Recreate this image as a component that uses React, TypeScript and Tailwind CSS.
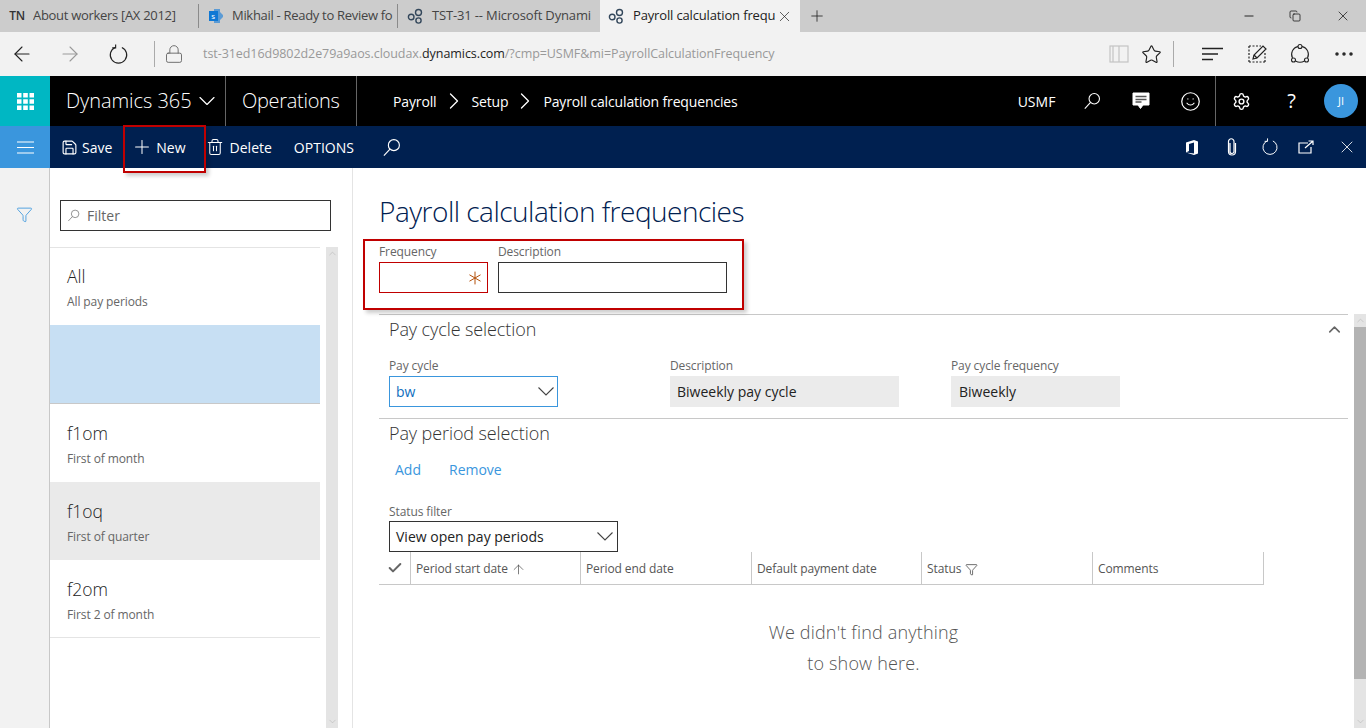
import type { ReactNode } from "react";
import {
  ArrowLeft,
  ArrowRight,
  ArrowUp,
  Asterisk,
  Check,
  ChevronDown,
  ChevronRight,
  ChevronUp,
  Copy,
  Filter,
  Lock,
  Minus,
  MoreHorizontal,
  Plus,
  Save,
  Settings,
  Smile,
  Star,
  Trash2,
  X,
} from "lucide-react";

const Gears = () => (
  <svg width="17" height="17" viewBox="0 0 17 17" fill="none" stroke="#33475b" strokeWidth="1.4">
    <circle cx="4.2" cy="9" r="2.8" />
    <circle cx="11.5" cy="4.5" r="3" />
    <circle cx="11.5" cy="12.5" r="2.6" />
  </svg>
);

const Share = () => (
  <svg width="16" height="16" viewBox="0 0 16 16">
    <path d="M6 1h6v3l3 3v2l-3 3v3H6z" fill="#5b9bd5" />
    <rect x="1" y="3" width="9" height="10" fill="#0f78d4" />
    <text x="3.2" y="11" fontSize="8" fill="#fff" fontFamily="Open Sans, sans-serif">s</text>
  </svg>
);

const Lens = ({ size, cls }: { size: number; cls?: string }) => (
  <svg width={size} height={size} viewBox="0 0 20 20" fill="none" stroke="currentColor" strokeWidth="1.2" className={cls}>
    <circle cx="12.5" cy="7.5" r="5.8" />
    <path d="M8.4 11.6 2 18.5" />
  </svg>
);

const Refresh = ({ size, cls }: { size: number; cls?: string }) => (
  <svg width={size} height={size} viewBox="0 0 22 22" fill="none" stroke="currentColor" strokeWidth="1.2" className={cls}>
    <path d="M7.5 3.6a8.6 8.6 0 1 0 7 0" />
    <path d="M8 0.5v3.6H4.4" />
  </svg>
);

const Wide = () => (
  <svg width="16" height="9" viewBox="0 0 16 9" fill="none" stroke="#444" strokeWidth="1.1">
    <path d="M0.5 0.5 8 8l7.5-7.5" />
  </svg>
);

const Tab = ({ icon, label, w }: { icon: ReactNode; label: string; w: string }) => (
  <div className={`flex items-center h-[24px] overflow-hidden whitespace-nowrap text-[13px] tracking-[-0.3px] text-[#444] border-r border-[#8a8a8a] ${w}`}>
    <div className="w-[33px] flex justify-center shrink-0">{icon}</div>
    <span className="overflow-hidden pr-[6px]">{label}</span>
  </div>
);

const ListItem = ({ title, sub, cls }: { title: string; sub: string; cls?: string }) => (
  <div className={`h-[78px] pl-[17px] pt-[17px] ${cls ?? ""}`}>
    <div className="text-[17.5px] leading-[24px] font-light text-[#222]">{title}</div>
    <div className="text-[12px] leading-[16px] tracking-[-0.1px] mt-[6px] text-[#666]">{sub}</div>
  </div>
);

const Label = ({ children, cls }: { children: ReactNode; cls?: string }) => (
  <div className={`text-[12px] leading-[14px] tracking-[-0.1px] text-[#666] mb-[3px] ${cls ?? ""}`}>{children}</div>
);

const Col = ({ children, w }: { children: ReactNode; w: string }) => (
  <div className={`flex items-center h-full border-l border-[#c8c8c8] pl-[5px] pt-[2px] text-[12px] tracking-[-0.1px] text-[#555] ${w}`}>{children}</div>
);

export default function App() {
  return (
    <div className="relative w-[1366px] h-[728px] overflow-hidden bg-white flex flex-col font-['Open_Sans',sans-serif]">
      {/* browser tabs */}
      <div className="h-[32px] bg-[#cccccc] flex items-center shrink-0">
        <Tab w="w-[199px]" icon={<span className="text-[12px] font-semibold text-[#333] pl-[1px]">TN</span>} label="About workers [AX 2012]" />
        <Tab w="w-[199px]" icon={<Share />} label="Mikhail - Ready to Review fo" />
        <div className="w-[202px] flex items-center h-full overflow-hidden whitespace-nowrap text-[13px] tracking-[-0.15px] text-[#444]">
          <div className="w-[34px] flex justify-center shrink-0"><Gears /></div>
          <span>TST-31 -- Microsoft Dynami</span>
        </div>
        <div className="w-[200px] h-full bg-[#f2f2f2] flex items-center text-[13px] tracking-[-0.15px] text-[#222] whitespace-nowrap">
          <div className="w-[33px] flex justify-center shrink-0"><Gears /></div>
          <span className="w-[143px] overflow-hidden">Payroll calculation frequ</span>
          <X size={17} strokeWidth={1} />
        </div>
        <Plus size={18} strokeWidth={1.1} className="ml-[8px] text-[#222]" />
        <div className="flex-1" />
        <Minus size={14} strokeWidth={1.5} className="mr-[33px] text-[#111]" />
        <Copy size={12} strokeWidth={1.5} className="mr-[34px] text-[#111]" />
        <X size={16} strokeWidth={1.1} className="mr-[15px] text-[#111]" />
      </div>

      {/* address bar */}
      <div className="h-[44px] bg-[#f2f2f2] flex items-center shrink-0 pl-[10px]">
        <ArrowLeft size={24} strokeWidth={1.1} className="text-[#222]" />
        <ArrowRight size={24} strokeWidth={1.1} className="ml-[24px] text-[#9a9a9a]" />
        <Refresh size={21} cls="ml-[26px] text-[#222]" />
        <div className="w-px h-[26px] bg-[#aaa] ml-[25px]" />
        <Lock size={20} strokeWidth={1.1} className="ml-[9px] text-[#666]" />
        <div className="ml-[19px] text-[12.5px] tracking-[-0.06px] text-[#999] whitespace-nowrap">
          tst-31ed16d9802d2e79a9aos.cloudax.<span className="text-[#222]">dynamics.com</span>/?cmp=USMF&amp;mi=PayrollCalculationFrequency
        </div>
        <div className="flex-1" />
        <svg width="20" height="20" viewBox="0 0 20 20" fill="none" stroke="#c4c4c4" strokeWidth="1.2" className="mr-[12px]">
          <rect x="1" y="2" width="18" height="16" />
          <path d="M10 2v16M4 2v16" />
        </svg>
        <Star size={21} strokeWidth={1.3} className="text-[#222] mr-[11px]" />
        <div className="w-px h-[26px] bg-[#aaa] mr-[28px]" />
        <svg width="21" height="14" viewBox="0 0 21 14" stroke="#222" strokeWidth="1.3" className="mr-[24px]">
          <path d="M0 1.5h21M0 7h16M0 12.5h11" />
        </svg>
        <svg width="20" height="20" viewBox="0 0 20 20" fill="none" stroke="#222" strokeWidth="1.2" className="mr-[22px]">
          <path d="M2 2h12M2 18h16M2 2v16M18 9v9" strokeDasharray="2 1.5" />
          <path d="M6 15l1-4 9-9 3 3-9 9z" />
          <path d="M7 11l3 3" />
        </svg>
        <svg width="22" height="22" viewBox="0 0 22 22" fill="none" stroke="#222" strokeWidth="1.1" className="mr-[21px]">
          <path d="M9 3.5A8 8 0 0 0 3.5 15M18.5 15A8 8 0 0 0 13 3.5M6.5 18a9 9 0 0 0 9 0" />
          <circle cx="11" cy="3.5" r="2" />
          <circle cx="4.5" cy="17" r="2" />
          <circle cx="17.5" cy="17" r="2" />
        </svg>
        <MoreHorizontal size={24} strokeWidth={1.5} className="text-[#222] mr-[10px]" />
      </div>

      {/* black nav */}
      <div className="h-[50px] bg-black flex items-center shrink-0 text-white">
        <div className="w-[50px] h-full bg-[#00b7c3] flex items-center justify-center">
          <svg width="17" height="17" viewBox="0 0 17 17" fill="#fff">
            <path d="M0 0h4.5v4.5H0zM6.2 0h4.6v4.5H6.2zM12.5 0H17v4.5h-4.5zM0 6.2h4.5v4.6H0zM6.2 6.2h4.6v4.6H6.2zM12.5 6.2H17v4.6h-4.5zM0 12.5h4.5V17H0zM6.2 12.5h4.6V17H6.2zM12.5 12.5H17V17h-4.5z" />
          </svg>
        </div>
        <div className="w-[176px] h-full flex items-center pl-[16px] border-r border-[#666] text-[20px] tracking-[-0.05px] font-light whitespace-nowrap">
          Dynamics 365
          <ChevronDown size={28} strokeWidth={1} className="ml-[1px]" />
        </div>
        <div className="w-[131px] h-full flex items-center pl-[16px] border-r border-[#666] text-[20px] tracking-[-0.3px] font-light">Operations</div>
        <div className="flex items-center text-[14px] tracking-[-0.14px] pl-[36px] whitespace-nowrap">
          Payroll
          <ChevronRight size={28} strokeWidth={1.1} className="ml-[4px] mr-[3px]" />
          Setup
          <ChevronRight size={28} strokeWidth={1.1} className="ml-[3px] mr-[4px]" />
          Payroll calculation frequencies
        </div>
        <div className="flex-1" />
        <span className="text-[14px] mr-[28px]">USMF</span>
        <Lens size={18} cls="mr-[31px]" />
        <svg width="18" height="19" viewBox="0 0 18 19" fill="none" className="mr-[30px]">
          <path d="M1 1h16v12h-6l-2.5 3.5L6 13H1z" fill="#fff" stroke="#fff" />
          <path d="M3.5 4.5h11M3.5 7.5h11M3.5 10h6" stroke="#555" strokeWidth="1.3" />
        </svg>
        <Smile size={21} strokeWidth={1.4} className="mr-[14px]" />
        <div className="w-px h-full bg-[#666] mr-[16px]" />
        <Settings size={19} strokeWidth={1.8} className="mr-[36px]" />
        <span className="text-[20px] mr-[28px] leading-none">?</span>
        <div className="w-[34px] h-[34px] rounded-full bg-[#3a96dd] flex items-center justify-center text-[11px] mr-[8px]">JI</div>
      </div>

      {/* action bar */}
      <div className="h-[42px] bg-[#002050] flex items-center shrink-0 text-white text-[14px]">
        <div className="w-[50px] h-full bg-[#3a96dd] flex items-center justify-center">
          <svg width="17" height="13" viewBox="0 0 17 13" stroke="#fff" strokeWidth="1.1">
            <path d="M0 1h17M0 6.5h17M0 12h17" />
          </svg>
        </div>
        <Save size={17} strokeWidth={1.6} className="ml-[11px]" />
        <span className="ml-[4px]">Save</span>
        <Plus size={22} strokeWidth={1.1} className="ml-[19px]" />
        <span className="ml-[3px]">New</span>
        <Trash2 size={18} strokeWidth={1.4} className="ml-[20px]" />
        <span className="ml-[6px]">Delete</span>
        <span className="ml-[22px]">OPTIONS</span>
        <Lens size={19} cls="ml-[28px]" />
        <div className="flex-1" />
        <svg width="15" height="17" viewBox="0 0 15 17" fill="#fff" className="mr-[27px]">
          <path d="M1 3.5 9 1l4 1.5v12L9 16l-8-2.5 8 1V3.5L4 5v7l-3 1.5z" />
        </svg>
        <svg width="10" height="18" viewBox="0 0 10 18" fill="none" stroke="#fff" strokeWidth="1.2" className="mr-[24px]">
          <path d="M3 5v8.5a2 2 0 0 0 4 0V3.5a2.6 2.6 0 0 0-5.5 0v10a3.5 3.5 0 0 0 7 0V5" />
        </svg>
        <Refresh size={18} cls="mr-[19px]" />
        <svg width="16" height="14" viewBox="0 0 16 14" fill="none" stroke="#fff" strokeWidth="1.2" className="mr-[23px]">
          <path d="M10 3H1v10h12V7" />
          <path d="M7 8l7.5-6.5M10.5 1H15v4" />
        </svg>
        <X size={20} strokeWidth={1} className="mr-[9px]" />
      </div>

      {/* body */}
      <div className="flex-1 flex min-h-0">
        <div className="w-[50px] bg-[#f2f2f2] border-r border-[#c8c8c8] flex justify-center pt-[38px] shrink-0">
          <Filter size={17} strokeWidth={1.2} className="text-[#3a96dd]" />
        </div>

        {/* list pane */}
        <div className="w-[303px] border-r border-[#e4e4e4] shrink-0 flex flex-col">
          <div className="ml-[10px] mt-[32px] w-[271px] h-[31px] border border-[#333] flex items-center pl-[6px] text-[14px] text-[#666]">
            <Lens size={13} cls="mr-[7px] text-[#777]" />
            Filter
          </div>
          <div className="flex flex-1 mt-[16px] min-h-0">
            <div className="w-[270px]">
              <ListItem title="All" sub="All pay periods" cls="border-t border-[#e4e4e4] !pt-[16px]" />
              <div className="h-[79px] bg-[#c7dff3] border-b border-[#c8c8c8]" />
              <ListItem title="f1om" sub="First of month" />
              <ListItem title="f1oq" sub="First of quarter" cls="bg-[#eaeaea]" />
              <ListItem title="f2om" sub="First 2 of month" cls="border-b border-[#e4e4e4]" />
            </div>
            <div className="ml-[6px] w-[12px] bg-[#e4e4e4] flex flex-col items-center justify-between text-[#aaa]">
              <ChevronUp size={11} strokeWidth={1} className="mt-[1px]" />
              <ChevronDown size={11} strokeWidth={1} className="mb-[1px]" />
            </div>
          </div>
        </div>

        {/* form */}
        <div className="flex-1 min-w-0 pl-[26px] flex flex-col">
          <div className="text-[28px] leading-[38px] tracking-[-0.5px] font-light text-[#002050] mt-[24px] whitespace-nowrap">Payroll calculation frequencies</div>
          <div className="flex gap-[10px] mt-[15px] h-[48px]">
            <div>
              <Label>Frequency</Label>
              <div className="w-[109px] h-[31px] border border-[#c00000] flex items-center justify-end">
                <Asterisk size={24} strokeWidth={1} className="text-[#b4500a]" />
              </div>
            </div>
            <div>
              <Label>Description</Label>
              <div className="w-[229px] h-[31px] border border-[#333]" />
            </div>
          </div>

          <div className="flex flex-1 mt-[21px] min-h-0">
            <div className="w-[969px]">
              <div className="border-t border-[#c8c8c8] h-[104px] pl-[10px] relative">
                <div className="text-[18px] leading-[24px] tracking-[-0.1px] font-light text-[#333] mt-[2px]">Pay cycle selection</div>
                <ChevronUp size={19} strokeWidth={2} className="absolute right-[4px] top-[5px] text-[#666]" />
                <div className="flex mt-[18px]">
                  <div className="w-[281px]">
                    <Label>Pay cycle</Label>
                    <div className="w-[169px] h-[31px] border border-[#3a96dd] flex items-center justify-between pl-[6px] pr-[3px] text-[14px] text-[#106ebe]">
                      bw
                      <Wide />
                    </div>
                  </div>
                  <div className="w-[281px]">
                    <Label>Description</Label>
                    <div className="w-[229px] h-[31px] bg-[#ebebeb] flex items-center pl-[7px] text-[14px] text-[#222]">Biweekly pay cycle</div>
                  </div>
                  <div>
                    <Label>Pay cycle frequency</Label>
                    <div className="w-[169px] h-[31px] bg-[#ebebeb] flex items-center pl-[8px] text-[14px] text-[#222]">Biweekly</div>
                  </div>
                </div>
              </div>

              <div className="border-t border-[#c8c8c8] pl-[10px]">
                <div className="text-[18px] leading-[24px] tracking-[-0.1px] font-light text-[#333] mt-[2px]">Pay period selection</div>
                <div className="flex text-[14px] text-[#3a96dd] mt-[15px] pl-[6px] gap-[28px] leading-[20px]">
                  <span>Add</span>
                  <span>Remove</span>
                </div>
                <Label cls="mt-[25px] !mb-[2px]">Status filter</Label>
                <div className="w-[229px] h-[31px] border border-[#333] flex items-center justify-between pl-[6px] pr-[4px] text-[14px] text-[#222]">
                  View open pay periods
                  <Wide />
                </div>
              </div>

              <div className="w-[885px] h-[33px] border-b border-[#c8c8c8] flex items-center">
                <div className="w-[31px] flex justify-center">
                  <Check size={16} strokeWidth={3} className="text-[#666]" />
                </div>
                <Col w="w-[170px]">
                  Period start date
                  <ArrowUp size={15} strokeWidth={1.1} className="ml-[3px] text-[#444]" />
                </Col>
                <Col w="w-[171px]">Period end date</Col>
                <Col w="w-[170px]">Default payment date</Col>
                <Col w="w-[171px]">
                  Status
                  <Filter size={13} strokeWidth={1.3} className="ml-[4px] text-[#333]" />
                </Col>
                <Col w="w-[172px] border-r">Comments</Col>
              </div>

              <div className="w-[969px] text-center text-[18px] tracking-[0.18px] leading-[31px] font-light text-[#555] mt-[32px]">
                We didn't find anything
                <br />
                to show here.
              </div>
            </div>

            <div className="ml-auto w-[12px] bg-[#e4e4e4] flex flex-col items-center text-[#aaa]">
              <ChevronUp size={11} strokeWidth={1} className="h-[13px]" />
              <div className="w-full h-[352px] bg-[#b3b3b3]" />
              <div className="flex-1" />
              <ChevronDown size={11} strokeWidth={1} className="mb-[1px]" />
            </div>
          </div>
        </div>
      </div>

      {/* red annotation boxes from the screenshot */}
      <div className="absolute left-[123px] top-[125px] w-[83px] h-[48px] border-2 border-[#c00000] shadow-[3px_3px_4px_rgba(0,0,0,0.2)]" />
      <div className="absolute left-[363px] top-[239px] w-[381px] h-[71px] border-2 border-[#c00000] shadow-[3px_3px_4px_rgba(0,0,0,0.2)]" />
    </div>
  );
}
